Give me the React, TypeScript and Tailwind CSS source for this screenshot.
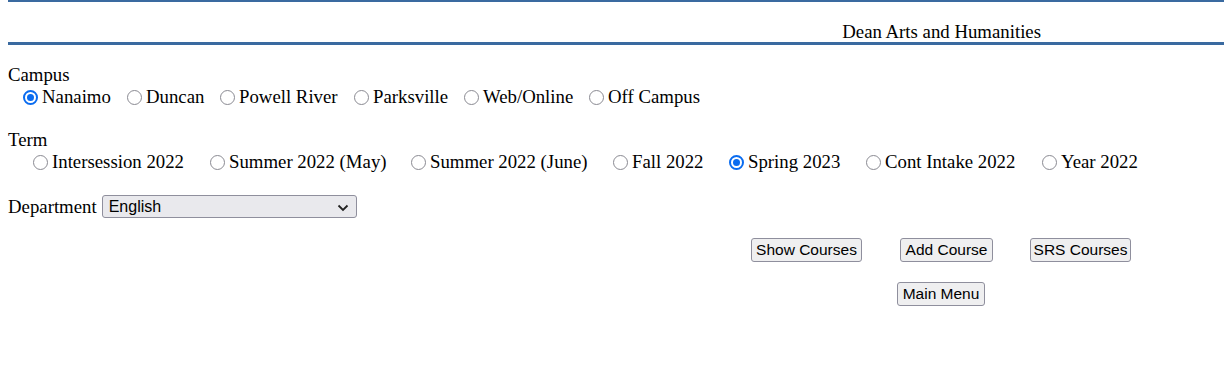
import React, { useState } from 'react';

// Campus and term options; w = distance from this radio to the next one
const campuses = [
  { label: 'Nanaimo', w: 'w-[104px]' },
  { label: 'Duncan', w: 'w-[93px]' },
  { label: 'Powell River', w: 'w-[134px]' },
  { label: 'Parksville', w: 'w-[110px]' },
  { label: 'Web/Online', w: 'w-[125px]' },
  { label: 'Off Campus', w: 'w-[120px]' },
];

const terms = [
  { label: 'Intersession 2022', w: 'w-[177px]' },
  { label: 'Summer 2022 (May)', w: 'w-[201px]' },
  { label: 'Summer 2022 (June)', w: 'w-[202px]' },
  { label: 'Fall 2022', w: 'w-[116px]' },
  { label: 'Spring 2023', w: 'w-[137px]' },
  { label: 'Cont Intake 2022', w: 'w-[176px]' },
  { label: 'Year 2022', w: 'w-[100px]' },
];

function Radio({
  name,
  label,
  w,
  checked,
  onChange,
}: {
  name: string;
  label: string;
  w: string;
  checked: boolean;
  onChange: () => void;
}) {
  return (
    <label className={`flex items-center shrink-0 ${w}`}>
      <input type="radio" name={name} checked={checked} onChange={onChange} className="sr-only" />
      {checked ? (
        <span className="mr-[4px] w-[15px] h-[15px] rounded-full border-[2px] border-[#0a6cf0] bg-white flex items-center justify-center">
          <span className="w-[7px] h-[7px] rounded-full bg-[#0a6cf0]" />
        </span>
      ) : (
        <span className="mr-[4px] w-[15px] h-[15px] rounded-full border-[1.5px] border-[#8a8a92] bg-white" />
      )}
      <span className="whitespace-nowrap">{label}</span>
    </label>
  );
}

function Btn({ children, w }: { children: React.ReactNode; w: string }) {
  return (
    <button
      className={`${w} h-[24px] shrink-0 flex items-center justify-center border border-[#8f8f9d] rounded-[3px] bg-[#efeff0] font-['Liberation_Sans',Arial,sans-serif] text-[15.5px] leading-none text-black`}
    >
      {children}
    </button>
  );
}

export default function App() {
  const [campus, setCampus] = useState('Nanaimo');
  const [term, setTerm] = useState('Spring 2023');

  return (
    <div className="w-[1224px] h-[390px] bg-white text-black font-['Liberation_Serif','Times_New_Roman',serif] text-[18.8px] leading-[22px]">
      {/* Header */}
      <div className="ml-2 border-t-2 border-[#3a6aa0]" />
      <div className="h-[40px] flex items-end justify-end pr-[183px]">
        <span className="leading-[20px]">Dean Arts and Humanities</span>
      </div>
      <div className="ml-2 border-t-[3px] border-[#3a6aa0]" />

      <div className="pl-2">
        {/* Campus */}
        <div className="mt-[19px]">Campus</div>
        <div className="flex pl-[15px]">
          {campuses.map((c) => (
            <Radio
              key={c.label}
              name="campus"
              label={c.label}
              w={c.w}
              checked={campus === c.label}
              onChange={() => setCampus(c.label)}
            />
          ))}
        </div>

        {/* Term */}
        <div className="mt-[21px]">Term</div>
        <div className="flex pl-[25px]">
          {terms.map((t) => (
            <Radio
              key={t.label}
              name="term"
              label={t.label}
              w={t.w}
              checked={term === t.label}
              onChange={() => setTerm(t.label)}
            />
          ))}
        </div>

        {/* Department */}
        <div className="mt-[22px] h-[23px] flex items-center">
          <span>Department</span>
          <div className="relative ml-[5px] w-[255px] h-[23px] border border-[#8f8f9d] rounded-[3px] bg-[#e9e9ed] flex items-center pl-[6px] font-['Liberation_Sans',Arial,sans-serif] text-[16px]">
            English
            <svg
              className="absolute right-[7px] top-[8px]"
              width="12"
              height="8"
              viewBox="0 0 12 8"
              fill="none"
              stroke="#222"
              strokeWidth="1.8"
            >
              <path d="M1.5 1.5 L6 6 L10.5 1.5" />
            </svg>
          </div>
        </div>
      </div>

      {/* Actions */}
      <div className="mt-[20px] flex pl-[751px]">
        <Btn w="w-[111px]">Show Courses</Btn>
        <div className="ml-[38px]">
          <Btn w="w-[93px]">Add Course</Btn>
        </div>
        <div className="ml-[37px]">
          <Btn w="w-[101px]">SRS Courses</Btn>
        </div>
      </div>
      <div className="mt-[20px] flex pl-[897px]">
        <Btn w="w-[88px]">Main Menu</Btn>
      </div>
    </div>
  );
}
